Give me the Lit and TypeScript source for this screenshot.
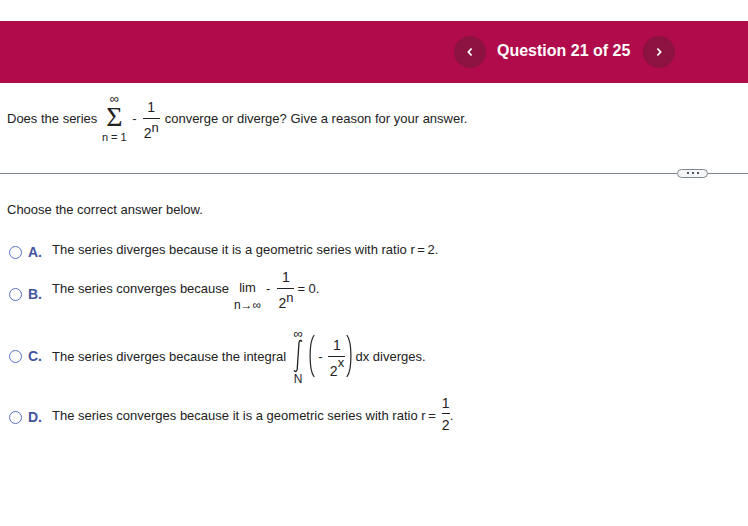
import { LitElement, html, css } from "lit";
import { customElement } from "lit/decorators.js";

const frac = (num: unknown, den: unknown, plain = false) => html`<span class="frac ${plain ? "plain" : ""}"><span class="num">${num}</span><span class="bar"></span><span class="den">${den}</span></span>`;
const pow = (b: string, e: string, high = false) => html`<span>${b}<sup class="sup ${high ? "high" : ""}">${e}</sup></span>`;
const paren = (flip: boolean) => html`<svg class="paren ${flip ? "pr" : "pl"}" width="6" height="44" viewBox="0 0 6 44"><path d=${flip ? "M.8 1C4 5 4.9 12 4.9 22S4 39 .8 43" : "M5.2 1C2 5 1.1 12 1.1 22S2 39 5.2 43"} fill="none" stroke="#222" stroke-width="1.2"/></svg>`;

@customElement("app-root")
export class AppRoot extends LitElement {
  static styles = css`
    :host { display: block; width: 748px; height: 526px; background: #fff; overflow: hidden; font-family: "Liberation Sans", Arial, sans-serif; font-size: 13px; color: #222; }
    .head { margin-top: 21px; height: 62px; background: #b00b4a; display: flex; align-items: center; padding-left: 454px; box-sizing: border-box; }
    .nav { width: 32px; height: 32px; border-radius: 50%; background: #8c1240; display: flex; align-items: center; justify-content: center; flex: none; }
    .title { width: 157px; padding: 0 0 2px 11px; box-sizing: border-box; color: #fff; font-size: 16px; font-weight: bold; white-space: nowrap; }
    .q { display: flex; align-items: center; height: 70px; padding-left: 7px; white-space: nowrap; }
    .rule { display: flex; align-items: center; height: 10px; margin-top: 15px; }
    .line { height: 1px; background: #7d8791; }
    .line.l { width: 677px; }
    .line.r { flex: 1; }
    .pill { width: 31px; height: 9px; box-sizing: border-box; border: 1px solid #7d8791; border-radius: 5px; background: #f4f6f8; display: flex; align-items: center; justify-content: center; gap: 3px; }
    .pill i { width: 2px; height: 2px; background: #4d5660; }
    .choose { margin: 24px 0 0 7px; line-height: 15px; }
    .opt { display: flex; align-items: center; padding-left: 9px; white-space: nowrap; }
    .a { height: 16px; margin-top: 24px; }
    .b { height: 48px; margin-top: 7px; }
    .c { height: 60px; margin-top: 14px; }
    .d { height: 40px; margin-top: 6px; }
    .mark { display: flex; align-items: center; flex: none; }
    .a .mark { margin-top: 6px; }
    .b .mark { margin-top: 12px; }
    .d .mark { margin-top: 10px; }
    .d .txt { margin-top: 6px; }
    .radio { width: 13px; height: 13px; box-sizing: border-box; border: 1.5px solid #5b72c9; border-radius: 50%; flex: none; }
    .letter { width: 30px; padding-left: 6px; box-sizing: border-box; font-size: 14px; font-weight: bold; color: #44549f; flex: none; }
    .frac { display: inline-flex; flex-direction: column; align-items: center; padding-top: 3px; font-size: 14px; min-width: 17px; }
    .frac.plain { padding-top: 3px; min-width: 8px; margin-left: 6px; }
    .num { line-height: 16px; padding-bottom: 3px; }
    .plain .num { padding-bottom: 2px; }
    .den { line-height: 16px; padding-top: 6px; }
    .plain .den { padding-top: 3px; }
    .bar { align-self: stretch; height: 1px; background: #222; }
    .sup { font-size: 13px; line-height: 0; vertical-align: 6px; }
    .sup.high { vertical-align: 9px; }
    .minus { margin: 0 6px 0 6px; }
    .lim { display: inline-flex; flex-direction: column; align-items: center; margin-left: 4px; padding-top: 16px; width: 29px; }
    .lim .word { line-height: 14px; }
    .lim .under { font-size: 12px; margin-top: 4px; line-height: 12px; }
    .b .minus { margin: 0 7px 0 4px; }
    .eq0 { margin-left: 3px; }
    .sum { display: inline-flex; flex-direction: column; align-items: center; margin-left: 5px; width: 24px; }
    .sum small { font-size: 11px; line-height: 12px; }
    .sum .inf { font-size: 13px; margin-bottom: 2px; }
    .sigma { font-size: 28px; line-height: 20px; height: 20px; margin-bottom: 4px; font-family: "Liberation Serif", serif; }
    .after { margin-left: 5px; }
    .int { display: inline-flex; flex-direction: column; align-items: center; margin-left: 5px; width: 14px; flex: none; }
    .int small { font-size: 12px; line-height: 12px; }
    .int .inf { font-size: 13px; line-height: 11px; }
    .intg { display: block; flex: none; }
    .paren { flex: none; }
    .pl { margin-left: 4px; }
    .pr { margin-left: 1px; }
    .c .minus { margin: 0 6px 0 3px; }
    .dx { margin-left: 3px; }
  `;

  render() {
    const f = frac("1", pow("2", "n"));
    const mark = (l: string) => html`<span class="mark"><span class="radio"></span><span class="letter">${l}</span></span>`;
    return html`
      <div class="head">
        <span class="nav"><svg width="8" height="10" viewBox="0 0 8 10"><path d="M5.6 1.5 2.4 5l3.2 3.5" fill="none" stroke="#fff" stroke-width="1.8"/></svg></span>
        <span class="title">Question 21 of 25</span>
        <span class="nav"><svg width="8" height="10" viewBox="0 0 8 10"><path d="M2.4 1.5 5.6 5 2.4 8.5" fill="none" stroke="#fff" stroke-width="1.8"/></svg></span>
      </div>
      <div class="q">
        <span>Does the series</span>
        <span class="sum"><small class="inf">∞</small><span class="sigma">Σ</span><small>n = 1</small></span>
        <span class="minus">-</span>${f}
        <span class="after">converge or diverge? Give a reason for your answer.</span>
      </div>
      <div class="rule"><span class="line l"></span><span class="pill"><i></i><i></i><i></i></span><span class="line r"></span></div>
      <div class="choose">Choose the correct answer below.</div>
      <div class="opt a">${mark("A.")}<span>The series diverges because it is a geometric series with ratio r\u2009=\u20092.</span></div>
      <div class="opt b">${mark("B.")}<span>The series converges because</span>
        <span class="lim"><span class="word">lim</span><span class="under">n→∞</span></span>
        <span class="minus">-</span>${f}<span class="eq0">= 0.</span></div>
      <div class="opt c">${mark("C.")}<span>The series diverges because the integral</span>
        <span class="int"><small class="inf">∞</small><svg class="intg" width="12" height="34" viewBox="0 0 12 34"><path d="M10 2.6C9 1 7.4 1 7 3.5L5.2 30.5C4.8 33 3 33 2 31.4" fill="none" stroke="#222" stroke-width="1.3"/></svg><small>N</small></span>
        ${paren(false)}<span class="minus">-</span>${frac("1", pow("2", "x", true))}${paren(true)}<span class="dx">dx diverges.</span></div>
      <div class="opt d">${mark("D.")}<span class="txt">The series converges because it is a geometric series with ratio r\u2009=</span>${frac("1", "2", true)}<span class="txt">.</span></div>
    `;
  }
}
